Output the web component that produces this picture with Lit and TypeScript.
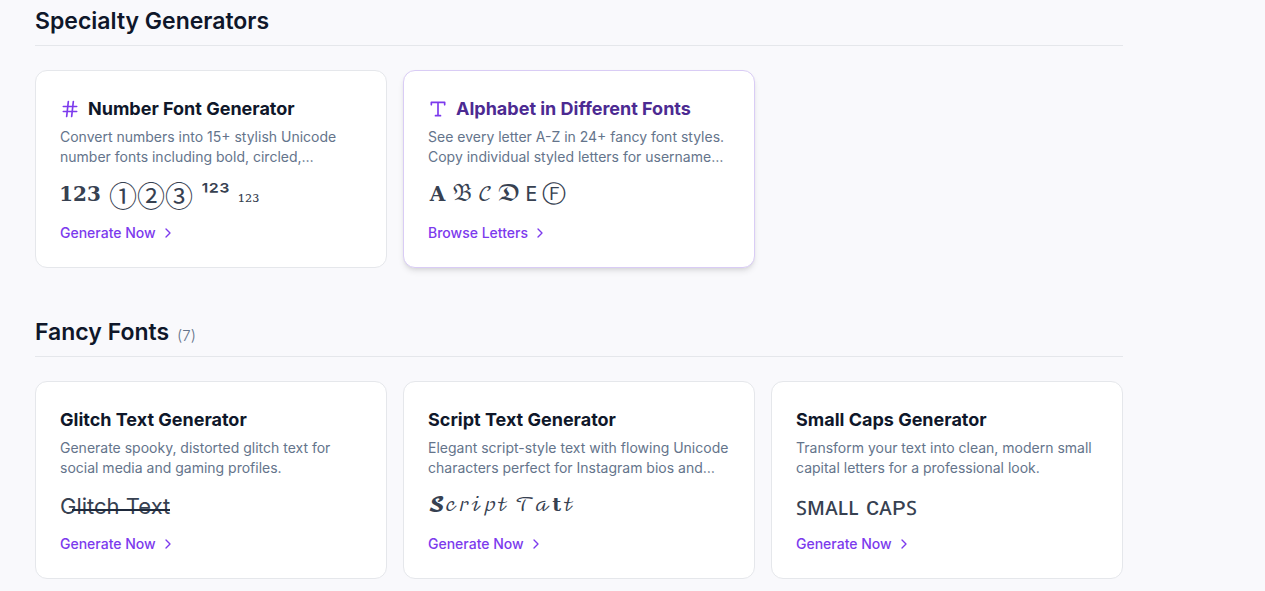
import { LitElement, html, css, svg, TemplateResult } from "lit";
import { customElement, property } from "lit/decorators.js";

const hashIcon = html`<svg class="icon" viewBox="0 0 24 24" aria-hidden="true">
  ${svg`<path d="M4 9h16M4 15h16M10 3 8 21M16 3l-2 18" />`}
</svg>`;

const typeIcon = html`<svg class="icon" viewBox="0 0 24 24" aria-hidden="true">
  ${svg`<path d="M4 7V4h16v3M9 20h6M12 4v16" />`}
</svg>`;

interface Generator {
  title: string;
  description: string;
  action: string;
  sample: TemplateResult;
  icon?: TemplateResult;
  active?: boolean;
}

const specialty: Generator[] = [
  {
    title: "Number Font Generator",
    description:
      "Convert numbers into 15+ stylish Unicode number fonts including bold, circled,…",
    action: "Generate Now",
    icon: hashIcon,
    sample: html`<p class="sample numbers"><span class="math">𝟏𝟐𝟑</span><span class="circled">①②③</span
      ><span class="super">¹²³</span><span class="sub">₁₂₃</span></p>`,
  },
  {
    title: "Alphabet in Different Fonts",
    description:
      "See every letter A-Z in 24+ fancy font styles. Copy individual styled letters for username…",
    action: "Browse Letters",
    icon: typeIcon,
    active: true,
    sample: html`<p class="sample letters"><span class="math">𝐀</span><span class="math">𝔅</span
      ><span class="math">𝒞</span><span class="math">𝕯</span
      ><span class="math">𝙴</span><span class="ring">Ⓕ</span></p>`,
  },
];

const fancy: Generator[] = [
  {
    title: "Glitch Text Generator",
    description:
      "Generate spooky, distorted glitch text for social media and gaming profiles.",
    action: "Generate Now",
    sample: html`<p class="sample"><span class="glitch">Glitch Text</span></p>`,
  },
  {
    title: "Script Text Generator",
    description:
      "Elegant script-style text with flowing Unicode characters perfect for Instagram bios and…",
    action: "Generate Now",
    sample: html`<p class="sample"><span class="script">𝓢𝒸𝓇𝒾𝓅𝓉 𝒯𝒶𝐭𝓉</span></p>`,
  },
  {
    title: "Small Caps Generator",
    description:
      "Transform your text into clean, modern small capital letters for a professional look.",
    action: "Generate Now",
    sample: html`<p class="sample"><span class="caps">ꜱᴍᴀʟʟ ᴄᴀᴘꜱ</span></p>`,
  },
];

@customElement("generator-card")
export class GeneratorCard extends LitElement {
  @property({ attribute: false }) item!: Generator;

  static styles = css`
    :host {
      display: block;
      min-width: 0;
    }
    .card {
      display: flex;
      flex-direction: column;
      height: 100%;
      box-sizing: border-box;
      padding: 24px;
      border: 1px solid #e5e7eb;
      border-radius: 12px;
      background: #fff;
    }
    .card.active {
      border-color: #d9ccf5;
      box-shadow: 0 4px 6px -1px rgb(0 0 0 / 0.1), 0 2px 4px -2px rgb(0 0 0 / 0.1);
    }
    .title {
      display: flex;
      align-items: center;
      gap: 8px;
      margin: 0 0 4px;
      font-size: 18px;
      line-height: 28px;
      font-weight: 700;
      color: #0f172a;
    }
    .active .title {
      color: #4c2a92;
    }
    .icon {
      width: 20px;
      height: 20px;
      flex: none;
      fill: none;
      stroke: #7c3aed;
      stroke-width: 2;
      stroke-linecap: round;
      stroke-linejoin: round;
    }
    .description {
      margin: 0 0 12px;
      font-size: 14px;
      line-height: 20px;
      color: #64748b;
    }
    .sample {
      display: flex;
      align-items: center;
      height: 32px;
      margin: 0 0 12px;
      font-size: 24px;
      line-height: 32px;
      white-space: nowrap;
      color: #374151;
    }
    .numbers {
      gap: 8px;
    }
    .letters {
      gap: 5px;
    }
    .math {
      font-family: "DejaVu Math TeX Gyre", "DejaVu Serif", serif;
      font-size: 20px;
    }
    .script {
      font-family: "DejaVu Math TeX Gyre", "DejaVu Serif", serif;
      font-size: 19px;
    }
    .circled {
      font-family: "Noto Sans CJK SC", sans-serif;
      font-size: 28px;
    }
    .sub {
      font-family: "DejaVu Serif Condensed", "DejaVu Serif", serif;
      font-size: 20px;
    }
    .ring {
      font-family: "DejaVu Math TeX Gyre", "DejaVu Sans", sans-serif;
    }
    .caps {
      font-size: 26px;
    }
    .glitch {
      position: relative;
      font-size: 22px;
    }
    .glitch::after {
      content: "";
      position: absolute;
      left: 12px;
      right: 0;
      top: 19px;
      height: 2px;
      background: #1e293b;
    }
    .action {
      display: inline-flex;
      align-self: flex-start;
      align-items: center;
      gap: 4px;
      font-size: 14px;
      line-height: 20px;
      font-weight: 500;
      color: #7c3aed;
      text-decoration: none;
    }
    .chevron {
      width: 16px;
      height: 16px;
      fill: none;
      stroke: currentColor;
      stroke-width: 2;
      stroke-linecap: round;
      stroke-linejoin: round;
    }
  `;

  render() {
    const { title, description, action, sample, icon, active } = this.item;
    return html`<article class="card ${active ? "active" : ""}">
      <h3 class="title">${icon}<span>${title}</span></h3>
      <p class="description">${description}</p>
      ${sample}
      <a class="action" href="#"
        >${action}<svg class="chevron" viewBox="0 0 24 24" aria-hidden="true">
          <path d="m9 18 6-6-6-6" /></svg
      ></a>
    </article>`;
  }
}

@customElement("app-root")
export class AppRoot extends LitElement {
  static styles = css`
    :host {
      display: block;
      min-height: 100vh;
      box-sizing: border-box;
      padding: 5px 35px 12px;
      background: #f9f9fc;
      font-family: Inter, "Liberation Sans", sans-serif;
    }
    .sections {
      display: flex;
      flex-direction: column;
      gap: 48px;
      max-width: 1088px;
    }
    .heading {
      display: flex;
      align-items: center;
      gap: 8px;
      margin: 0 0 24px;
      padding-bottom: 8px;
      border-bottom: 1px solid #e5e7eb;
      font-size: 23px;
      line-height: 32px;
      font-weight: 600;
      color: #0f172a;
    }
    .count {
      padding-top: 8px;
      font-size: 15px;
      line-height: 24px;
      font-weight: 300;
      color: #64748b;
    }
    .grid {
      display: grid;
      grid-template-columns: repeat(3, minmax(0, 1fr));
      gap: 16px;
    }
  `;

  private section(title: string, items: Generator[], count?: number) {
    return html`<section>
      <h2 class="heading">
        <span>${title}</span>${count ? html`<span class="count">(${count})</span>` : null}
      </h2>
      <div class="grid">
        ${items.map((item) => html`<generator-card .item=${item}></generator-card>`)}
      </div>
    </section>`;
  }

  render() {
    return html`<main class="sections">
      ${this.section("Specialty Generators", specialty)}
      ${this.section("Fancy Fonts", fancy, 7)}
    </main>`;
  }
}
